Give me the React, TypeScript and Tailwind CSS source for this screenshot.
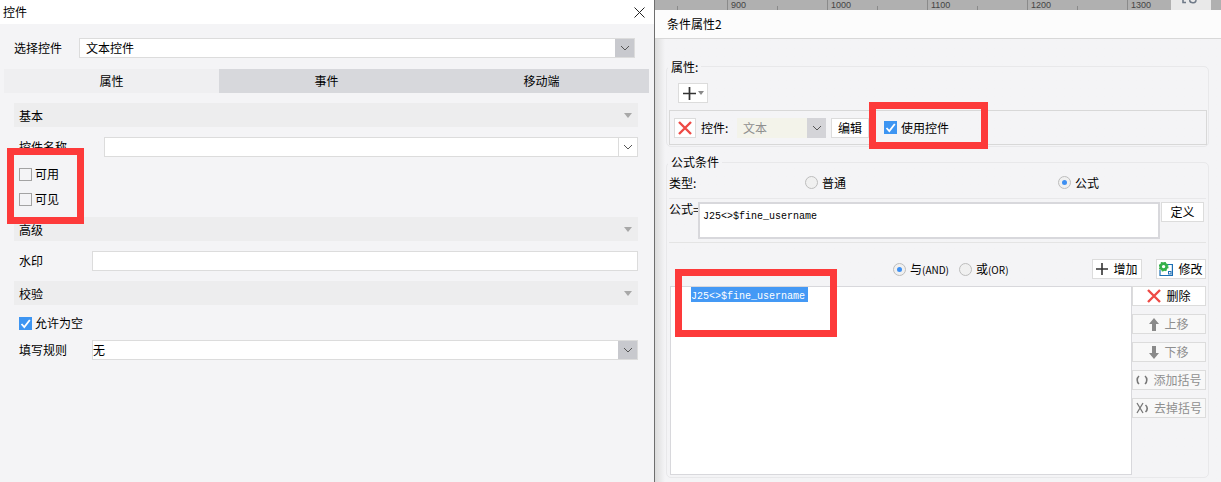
const cjk = 'font-["Noto_Sans_CJK_SC","Liberation_Sans",sans-serif]'
const mono = 'font-["Liberation_Mono","Noto_Sans_CJK_SC",monospace]'

function Caret({ className = '' }: { className?: string }) {
  return (
    <svg width="10" height="6" viewBox="0 0 10 6" className={className}>
      <path d="M1 1l4 4 4-4" fill="none" stroke="#555" strokeWidth="1" />
    </svg>
  )
}

function Check({ on, label, className = '' }: { on?: boolean; label: string; className?: string }) {
  return (
    <div className={`flex items-center h-[14px] gap-[3px] ${className}`}>
      {on ? (
        <span className="w-[13px] h-[13px] bg-[#3d95f2] flex items-center justify-center">
          <svg width="11" height="11" viewBox="0 0 11 11">
            <path d="M1.5 6l2.8 3L9.8 2" fill="none" stroke="#fff" strokeWidth="1.8" />
          </svg>
        </span>
      ) : (
        <span className="w-[13px] h-[13px] border border-[#a3a3a3] bg-[#f4f4f6]" />
      )}
      <span className="leading-none">{label}</span>
    </div>
  )
}

function Radio({ on, label, className = '' }: { on?: boolean; label: React.ReactNode; className?: string }) {
  return (
    <div className={`flex items-center gap-[4px] ${className}`}>
      <span className="w-[13px] h-[13px] rounded-full border border-[#bdbdbd] bg-[#f0f0f0] flex items-center justify-center">
        {on && <span className="w-[5px] h-[5px] rounded-full bg-[#3d8ff2]" />}
      </span>
      <span className="leading-none">{label}</span>
    </div>
  )
}

function Section({ title }: { title: string }) {
  return (
    <div className="h-6 ml-[14px] mr-[16px] bg-[#ededee] flex items-center justify-between pl-[5px] pr-[6px]">
      <span className="pt-px">{title}</span>
      <span className="w-0 h-0 border-x-[4px] border-x-transparent border-t-[5px] border-t-[#a8a8a8]" />
    </div>
  )
}

function ToolButton({ icon, label, disabled, className = '' }: { icon: React.ReactNode; label: string; disabled?: boolean; className?: string }) {
  return (
    <div
      className={`h-5 border border-[#dcdcdc] flex items-center justify-center gap-[5px] ${
        disabled ? 'text-[#8f8f8f] bg-[#f8f8f8]' : 'bg-white'
      } ${className}`}
    >
      {icon}
      <span>{label}</span>
    </div>
  )
}

const RedX = ({ size = 14 }: { size?: number }) => (
  <svg width={size} height={size} viewBox="0 0 14 14">
    <path d="M1 1l12 12M13 1L1 13" stroke="#ee4a45" strokeWidth="2.4" />
  </svg>
)

const Plus = ({ size = 12 }: { size?: number }) => (
  <svg width={size} height={size} viewBox="0 0 12 12">
    <path d="M0 6h12M6 0v12" stroke="#333" strokeWidth="1.6" />
  </svg>
)

function Ruler() {
  const marks = ['900', '1000', '1100', '1200', '1300']
  return (
    <div className="h-[10px] bg-[#b0b0b0] flex overflow-hidden text-[#444] text-[9px] font-['Liberation_Sans',sans-serif]">
      <div className="w-[72px] shrink-0 h-full relative">
        <span className="absolute left-[22px] bottom-0 w-px h-[4px] bg-[#8a8a8a]" />
      </div>
      {marks.map((m) => (
        <div
          key={m}
          className={`shrink-0 h-full relative border-l border-[#8a8a8a] pl-[3px] leading-[10px] ${m === '1300' ? 'w-[44px]' : 'w-[100px]'}`}
        >
          {m}
          {m !== '1300' && <span className="absolute left-[49px] bottom-0 w-px h-[4px] bg-[#8a8a8a]" />}
        </div>
      ))}
      <div className="w-[40px] shrink-0 bg-[#e9e9e9] pl-[11px]">
        <svg width="16" height="4" viewBox="0 0 16 4" className="block">
          <path d="M1 0v2.5h3M8 0c-1.2 2.600 4.200 3.600 5.500 1.800C14 1 14 .5 13.800 0" fill="none" stroke="#6f7a88" strokeWidth="1.6" />
        </svg>
      </div>
      <div className="flex-1" />
    </div>
  )
}

function LeftPanel() {
  return (
    <div className="w-[655px] shrink-0 h-full bg-[#f4f4f6] border-r border-[#6e6e6e] flex flex-col">
      <div className="h-6 bg-white flex items-center justify-between pl-[3px] pr-[9px]">
        <span>控件</span>
        <svg width="11" height="11" viewBox="0 0 11 11">
          <path d="M.5.5l10 10M10.5.5l-10 10" stroke="#222" strokeWidth="1" />
        </svg>
      </div>

      <div className="mt-[14px] flex items-center pl-[14px]">
        <span className="w-[65px]">选择控件</span>
        <div className="w-[556px] h-5 bg-white border border-[#dcdcdc] flex items-center justify-between">
          <span className="pl-[6px]">文本控件</span>
          <span className="w-[19px] h-full bg-[#c8c9ce] flex items-center justify-center"><Caret /></span>
        </div>
      </div>

      <div className="mt-[11px] ml-[4px] w-[645px] h-6 grid grid-cols-3 bg-[#d7d8dc]">
        <div className="bg-[#efeff1] flex items-center justify-center">属性</div>
        <div className="flex items-center justify-center">事件</div>
        <div className="flex items-center justify-center">移动端</div>
      </div>

      <div className="mt-[10px]"><Section title="基本" /></div>

      <div className="mt-[10px] flex items-center pl-[19px]">
        <span className="w-[85px]">控件名称</span>
        <div className="w-[534px] h-5 bg-white border border-[#dcdcdc] flex justify-end">
          <span className="w-[19px] h-full border-l border-[#dcdcdc] flex items-center justify-center"><Caret /></span>
        </div>
      </div>

      <Check label="可用" className="mt-[10px] ml-[19px]" />
      <Check label="可见" className="mt-[11px] ml-[19px]" />

      <div className="mt-[11px]"><Section title="高级" /></div>

      <div className="mt-[10px] flex items-center pl-[19px]">
        <span className="w-[73px]">水印</span>
        <div className="w-[546px] h-5 bg-white border border-[#dcdcdc]" />
      </div>

      <div className="mt-[10px]"><Section title="校验" /></div>

      <Check on label="允许为空" className="mt-[11px] ml-[19px]" />

      <div className="mt-[10px] flex items-center pl-[19px]">
        <span className="w-[73px]">填写规则</span>
        <div className="w-[546px] h-5 bg-white border border-[#dcdcdc] flex items-center justify-between">
          <span>无</span>
          <span className="w-[19px] h-full bg-[#c8c9ce] flex items-center justify-center"><Caret /></span>
        </div>
      </div>
    </div>
  )
}

function RightPanel() {
  return (
    <div className="flex-1 h-full flex flex-col min-w-0">
      <Ruler />
      <div className="h-[29px] bg-[#fcfcfc] border-b border-[#d8d8d8] flex items-center pl-[12px]">条件属性2</div>
      <div className="flex-1 bg-gradient-to-r from-[#dcdcdc] to-[#f4f4f6] to-[10px] pl-[11px] pr-[12px]">
        {/* 属性 */}
        <div className="relative mt-[27px] h-[81px] rounded-[5px] border border-[#e8e8ea] pt-[16px] pl-[2px] pr-[1px]">
          <span className="absolute left-[1px] top-[-8px] bg-[#f4f4f6] px-[3px] leading-4">属性:</span>
          <div className="ml-[9px] w-[30px] h-5 bg-white border border-[#dcdcdc] flex items-center justify-center gap-[2px]">
            <Plus size={13} />
            <span className="w-0 h-0 border-x-[3px] border-x-transparent border-t-[4px] border-t-[#8a8a8a]" />
          </div>
          <div className="mt-[7px] h-[35px] border border-[#d8d8d8] flex items-center pl-[4px]">
            <div className="w-[22px] h-5 bg-white border border-[#dcdcdc] flex items-center justify-center"><RedX /></div>
            <span className="ml-[5px] w-[36px]">控件:</span>
            <div className="w-[89px] h-5 bg-[#f3f3ea] flex items-center justify-between text-[#8f8f8f]">
              <span className="pl-[6px]">文本</span>
              <span className="w-[19px] h-full bg-[#d4d4d8] flex items-center justify-center"><Caret /></span>
            </div>
            <div className="ml-[5px] w-[38px] h-5 bg-white border border-[#dcdcdc] flex items-center justify-center">编辑</div>
            <Check on label="使用控件" className="ml-[15px] gap-[4px]" />
          </div>
        </div>

        {/* 公式条件 */}
        <div className="relative mt-[15px] h-[316px] rounded-[5px] border border-[#e8e8ea] pl-[2px] pr-[2px]">
          <span className="absolute left-[1px] top-[-9px] bg-[#f4f4f6] px-[3px] leading-4">公式条件</span>
          <div className="h-[36px] pt-[4px] border-b border-[#e8e8ea] flex items-center">
            <span className="w-[136px]">类型:</span>
            <Radio label="普通" />
            <Radio on label="公式" className="ml-[212px]" />
          </div>
          <div className="mt-[3px] flex items-start h-[41px] border-b border-[#e4e4e4]">
            <span className="w-[29px] leading-[14px] whitespace-nowrap">公式=</span>
            <div className={`w-[462px] h-[37px] bg-white border-2 border-[#d8d8dc] pl-[3px] pt-[6px] text-[10px] leading-[14px] ${mono}`}>
              {'J25<>$fine_username'}
            </div>
            <div className="ml-px w-[43px] h-5 bg-white border border-[#dcdcdc] flex items-center justify-center">定义</div>
          </div>
          <div className="mt-[16px] h-5 flex items-center">
            <Radio on label={<>与<span className="text-[10px]">(AND)</span></>} className="ml-[224px] gap-[3px]" />
            <Radio label={<>或<span className="text-[10px]">(OR)</span></>} className="ml-[10px] gap-[3px]" />
            <ToolButton className="ml-auto w-[50px]" icon={<Plus />} label="增加" />
            <ToolButton
              className="ml-[14px] w-[50px]"
              icon={
                <svg width="14" height="14" viewBox="0 0 14 14">
                  <path d="M6 2.500h7.400v11H1V8" fill="none" stroke="#1c6fb5" strokeWidth="1.2" />
                  <circle cx="4.600" cy="4.600" r="3" fill="none" stroke="#35b04a" strokeWidth="2.600" />
                  <circle cx="4.600" cy="4.600" r="4.300" fill="none" stroke="#35b04a" strokeWidth="1.400" strokeDasharray="1.600 1.800" />
                  <rect x="9.500" y="9.500" width="2.500" height="2.500" fill="#fff" stroke="#1c6fb5" />
                </svg>
              }
              label="修改"
            />
          </div>
          <div className="mt-[7px] flex items-start pl-px">
            <div className={`w-[462px] shrink-0 h-[189px] bg-white border border-[#d8d8dc] pl-[20px] text-[10px] ${mono}`}>
              <span className="block bg-[#4499f5] text-white w-[117px] h-[15px] leading-[19px]">
                {'J25<>$fine_username'}
              </span>
            </div>
            <div className="w-[74px] shrink-0 flex flex-col gap-2">
              <ToolButton icon={<RedX />} label="删除" />
              <ToolButton disabled icon={<svg width="10" height="13" viewBox="0 0 10 13"><path d="M5 0l5 6H7v7H3V6H0z" fill="#8a8a8a" /></svg>} label="上移" />
              <ToolButton disabled icon={<svg width="10" height="13" viewBox="0 0 10 13"><path d="M5 13L0 7h3V0h4v7h3z" fill="#8a8a8a" /></svg>} label="下移" />
              <ToolButton
                disabled
                icon={
                  <svg width="12" height="10" viewBox="0 0 12 10">
                    <path d="M3 1C.6 3 .6 7 3 9M9 1c2.400 2 2.400 6 0 8" fill="none" stroke="#777" strokeWidth="1.600" />
                  </svg>
                }
                label="添加括号"
              />
              <ToolButton
                disabled
                icon={
                  <svg width="13" height="12" viewBox="0 0 13 12">
                    <path d="M1 1l6 10M7 1L1 11" fill="none" stroke="#777" strokeWidth="1.300" />
                    <path d="M9.500 3c2.300 2 2.300 5 0 7" fill="none" stroke="#777" strokeWidth="1.600" />
                  </svg>
                }
                label="去掉括号"
              />
            </div>
          </div>
        </div>
      </div>
    </div>
  )
}

export default function App() {
  return (
    <div className={`relative w-[1221px] h-[482px] overflow-hidden flex text-xs text-black bg-[#f4f4f6] ${cjk}`}>
      <LeftPanel />
      <RightPanel />

      {/* red annotation boxes */}
      <div className="absolute left-[7px] top-[148px] w-[77px] h-[76px] border-[7px] border-[#fd3a3a]" />
      <div className="absolute left-[869px] top-[102px] w-[119px] h-[47px] border-[7px] border-[#fd3a3a]" />
      <div className="absolute left-[675px] top-[269px] w-[162px] h-[68px] border-[7px] border-[#fd3a3a]" />
    </div>
  )
}
